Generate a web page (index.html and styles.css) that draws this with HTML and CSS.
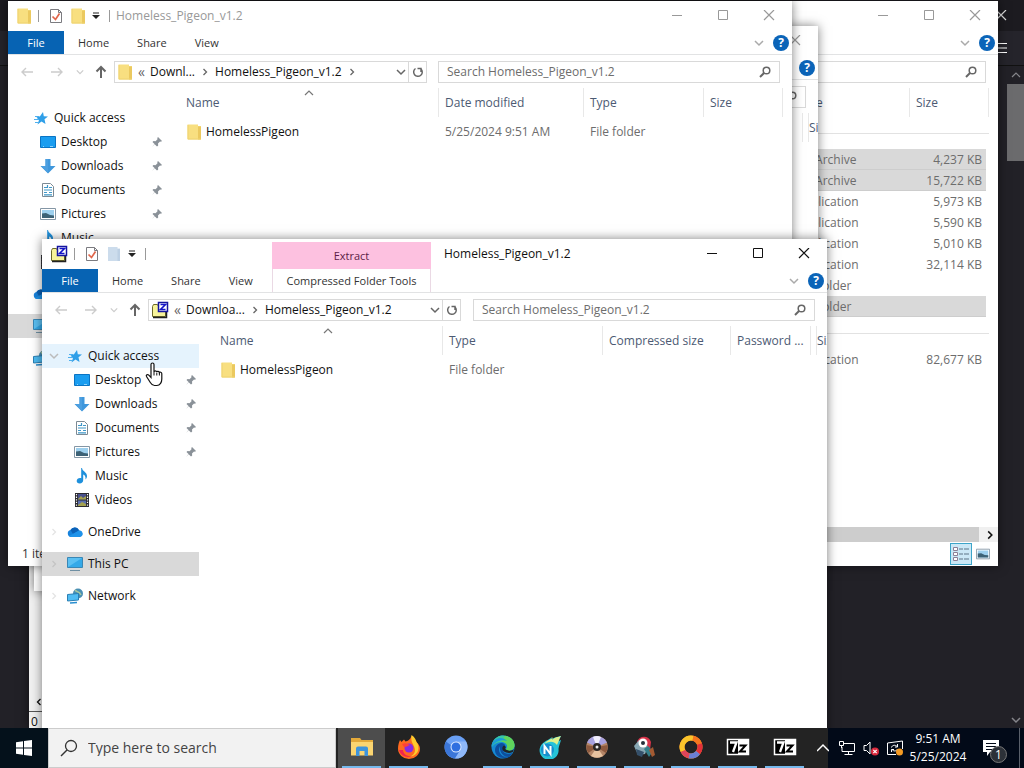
FILE: index.html
```html
<!DOCTYPE html>
<html lang="en">
<head>
  <meta charset="utf-8">
  <title>Desktop</title>
  <link rel="stylesheet" href="styles.css">
</head>
<body>
  <!-- shared icons -->
  <svg class="sprite" aria-hidden="true">
    <symbol id="i-folder" viewBox="0 0 16 16"><path d="M1.500.5h10.500V2H15v13.500H1.500z" fill="#f8df80"/><path d="M12 2.500h3v13h-3z" fill="#ebc95f"/><path d="M2 1v14h12.500" fill="none" stroke="#eed270"/></symbol>
    <symbol id="i-folder-off" viewBox="0 0 16 16"><path d="M2 1h9.500v1.500H14V15H2z" fill="#ccdcec"/><path d="M11.500 3h2.500v12h-2.500z" fill="#bdd0e4"/></symbol>
    <symbol id="i-zip" viewBox="0 0 18 18"><path d="M1.500 5.500l1-2h4l1 2h7v10h-13z" fill="#f8f49a" stroke="#6d6a28"/><path d="M2 16.500h13.500V10" fill="none" stroke="#222" stroke-width="1.500"/><path d="M7.500 1.500h9v9h-9z" fill="#fff" stroke="#1414a0" stroke-width="1.500"/><path d="M9.500 3.500h5l-5 5h5" fill="none" stroke="#1414c8" stroke-width="1.600"/></symbol>
    <symbol id="i-check" viewBox="0 0 16 16"><path d="M2.500 1.500h8l3 3v10h-11z" fill="#fff" stroke="#7b7b80"/><path d="M10.500 1.500v3h3" fill="none" stroke="#7b7b80"/><path d="M4.500 8.500l3 3 4-6" fill="none" stroke="#e0664b" stroke-width="1.700"/></symbol>
    <symbol id="i-more" viewBox="0 0 8 8"><path d="M1 .5h6v1H1zM0 3h8L4 7z" fill="#222"/></symbol>
    <symbol id="i-min" viewBox="0 0 12 12"><path d="M1 5.500h10" stroke="currentColor" fill="none"/></symbol>
    <symbol id="i-max" viewBox="0 0 12 12"><path d="M1.500 .5h9v9h-9z" stroke="currentColor" fill="none"/></symbol>
    <symbol id="i-close" viewBox="0 0 12 12"><path d="M1 0l10 10M11 0L1 10" stroke="currentColor" stroke-width="1.200" fill="none"/></symbol>
    <symbol id="i-down" viewBox="0 0 10 10"><path d="M1 3l4 4 4-4" stroke="currentColor" stroke-width="1.500" fill="none"/></symbol>
    <symbol id="i-right" viewBox="0 0 10 10"><path d="M3.500 2l3 3-3 3" stroke="currentColor" stroke-width="1.300" fill="none"/></symbol>
    <symbol id="i-up" viewBox="0 0 10 10"><path d="M1 7l4-4 4 4" stroke="currentColor" stroke-width="1.200" fill="none"/></symbol>
    <symbol id="i-arrow" viewBox="0 0 14 14"><path d="M13 7H2M6 3L2 7l4 4" stroke="currentColor" stroke-width="1.400" fill="none"/></symbol>
    <symbol id="i-arrow-up" viewBox="0 0 14 14"><path d="M7 13V2M2.500 6.500L7 2l4.500 4.500" stroke="currentColor" stroke-width="2" fill="none"/></symbol>
    <symbol id="i-refresh" viewBox="0 0 12 12"><path d="M3.500 2.500A4.300 4.300 0 1 0 9 3M9 6V2.500H5.500" stroke="currentColor" stroke-width="1.500" fill="none"/></symbol>
    <symbol id="i-search" viewBox="0 0 12 12"><circle cx="7.500" cy="4.500" r="3.300" stroke="currentColor" stroke-width="1.500" fill="none"/><path d="M5 7L1 11" stroke="currentColor" stroke-width="2"/></symbol>
    <symbol id="i-star" viewBox="0 0 16 16"><path d="M10 2l.8 4.200L15 6.500l-3.500 2.700 1 4.800-4-2.500L4.500 14.500l1.500-4.500L3.500 7.500l3.500-1.200z" fill="#2f9fe8"/><path d="M2 6.500h4M1 9.500h5M2 12.500h3" stroke="#4fb0ee" stroke-width="1.200"/></symbol>
    <symbol id="i-desktop" viewBox="0 0 16 16"><path d="M.5 2.500h15v11H.5z" fill="#1a9df0" stroke="#0a74c4"/><path d="M3 12.500h1M10 12.500h3" stroke="#8fd3fa"/></symbol>
    <symbol id="i-download" viewBox="0 0 16 16"><path d="M5.500 1h5v7H15.500L8 15.500.500 8h5z" fill="#3f97dc"/><path d="M5.500 1H8v14L1 8h4.500z" fill="#4c9fe0"/></symbol>
    <symbol id="i-document" viewBox="0 0 16 16"><path d="M2.500 1.500h8l3 3v10h-11z" fill="#fff" stroke="#7c8a94"/><path d="M4 5.500h3M9 5.500h3M4 8h8M4 10.500h3M9 10.500h3M4 12.800h8M7.500 3v3" stroke="#3f97c8" stroke-width="1.200"/></symbol>
    <symbol id="i-picture" viewBox="0 0 16 16"><path d="M.5 2.500h15v11H.5z" fill="#fff" stroke="#8496a5"/><path d="M2 4h12v8H2z" fill="#9ed0ee"/><path d="M2 7.500l4-.5 4 2 4 .5V12H2z" fill="#3d6276"/></symbol>
    <symbol id="i-music" viewBox="0 0 16 16"><path d="M8 0c.5 3.500 5 4 5 8 0 1.500-.6 2.500-1.500 3.500.5-3-1-4.500-2.300-5V12c0 2-1.500 3.500-3.500 3.500S2.700 14.500 2.700 13c0-1.700 1.600-3 3.300-3 .8 0 1 .2 1.200.3V0z" fill="#1e90dc"/></symbol>
    <symbol id="i-video" viewBox="0 0 16 16"><path d="M1 1h14v14H1z" fill="#2b2b30"/><path d="M4 2h8v5.500H4z" fill="#48508c"/><path d="M4 8.500h8V14H4z" fill="#5b6fae"/><path d="M4 7l3-3 2 2 3-2v3.500H4zM4 13l4-3 4 2v2H4z" fill="#a5a24e"/><path d="M2.500 2v13M13.500 2v13" stroke="#fff" stroke-width="1.200" stroke-dasharray="1.300 1.300"/></symbol>
    <symbol id="i-cloud" viewBox="0 0 16 16"><path d="M4 13a3.500 3.500 0 0 1-.5-6.900A4.600 4.600 0 0 1 12 6.500 3.300 3.300 0 0 1 12.700 13z" fill="#1782dc"/><path d="M3.500 6.100A4.600 4.600 0 0 1 12 6.500L6 10z" fill="#0c62b8"/><path d="M2 12L12 6.500a3.300 3.300 0 0 1 2.500 5.800L12 13H4z" fill="#1f93ea"/></symbol>
    <symbol id="i-pc" viewBox="0 0 16 16"><path d="M.5 1.500h15v10H.5z" fill="#5cc0f2" stroke="#3a87b5"/><path d="M1 11L15 2v9z" fill="#35a9e8"/><path d="M3 14.500h10" stroke="#6f8fa3"/></symbol>
    <symbol id="i-network" viewBox="0 0 16 16"><circle cx="11" cy="5.500" r="5" fill="#4a8fb4"/><path d="M8 2c2 3 4 0 6 5" stroke="#a6c8a0" stroke-width="1.500" fill="none"/><path d="M.5 6.500l11-1v6.500l-11 1z" fill="#4fbcf2" stroke="#2a7fb4"/><path d="M3 15l7-.5" stroke="#2a8fd0" stroke-width="1.500"/></symbol>
    <symbol id="i-pin" viewBox="0 0 12 12"><path d="M7 1l4 4-1 .7-1-.2-2 2 .2 2L6 10.500 3.700 8.300 1 11l2.500-3L1.500 6l1-1 2 .2 2-2L6.300 2z" fill="#8a9198"/></symbol>
  </svg>

  <main class="desktop">
    <!-- dark browser behind everything -->
    <div class="browser">
      <div class="browser-title"><svg class="s12"><use href="#i-close"/></svg></div>
      <div class="browser-bar"><svg class="s12" viewBox="0 0 12 12"><path d="M0 1.500h12M0 6h12M0 10.500h12" stroke="#fff"/></svg></div>
      <div class="browser-page">
        <div class="scroll">
          <svg class="s10"><use href="#i-up"/></svg>
          <div class="thumb"></div>
          <svg class="s10 last"><use href="#i-down"/></svg>
        </div>
      </div>
    </div>

    <div class="window old-app">
      <div class="old-scroll"><svg class="s10 flip"><use href="#i-right"/></svg></div>
      <div class="old-status">0</div>
    </div>

    <!-- downloads -->
    <section class="window inactive downloads">
      <header class="titlebar">
        <div class="caption">
          <button aria-label="Minimize"><svg class="s12"><use href="#i-min"/></svg></button>
          <button aria-label="Maximize"><svg class="s12"><use href="#i-max"/></svg></button>
          <button aria-label="Close"><svg class="s12"><use href="#i-close"/></svg></button>
        </div>
      </header>
      <div class="ribbon">
        <div class="ribbon-end"><svg class="s10"><use href="#i-down"/></svg><button class="help" aria-label="Help">?</button></div>
      </div>
      <div class="nav">
        <label class="search"><input type="text" aria-label="Search"><svg class="s12"><use href="#i-search"/></svg></label>
      </div>
      <div class="content">
        <div class="sidebar"></div>
        <div class="files">
          <table class="list dense">
            <colgroup><col class="c-name"><col class="c-date"><col class="c-type"><col class="c-size"></colgroup>
            <thead><tr><th></th><th></th><th>Type</th><th>Size</th></tr></thead>
            <tbody>
              <tr class="group"><td colspan="4"><hr></td></tr>
              <tr class="selected"><td></td><td></td><td>zip Archive</td><td>4,237 KB</td></tr>
              <tr class="selected"><td></td><td></td><td>zip Archive</td><td>15,722 KB</td></tr>
              <tr><td></td><td></td><td>Application</td><td>5,973 KB</td></tr>
              <tr><td></td><td></td><td>Application</td><td>5,590 KB</td></tr>
              <tr><td></td><td></td><td>Application</td><td>5,010 KB</td></tr>
              <tr><td></td><td></td><td>Application</td><td>32,114 KB</td></tr>
              <tr><td></td><td></td><td>File folder</td><td></td></tr>
              <tr class="selected"><td></td><td></td><td>File folder</td><td></td></tr>
              <tr class="group"><td colspan="4"><hr></td></tr>
              <tr><td></td><td></td><td>Application</td><td>82,677 KB</td></tr>
            </tbody>
          </table>
        </div>
      </div>
      <div class="hscroll"><div class="hthumb"></div><svg class="s12"><use href="#i-right"/></svg></div>
      <footer class="status">
        <button class="view on" aria-label="Details"><svg class="s16" viewBox="0 0 16 16"><path d="M.5 1.500h4v3h-4zM.5 6.500h4v3h-4zM.5 11.500h4v3h-4z" fill="#fff" stroke="#8d7f96"/><path d="M6 3h4M11 3h5M6 8h4M11 8h5M6 13h4M11 13h5" stroke="#5d7586"/></svg></button>
        <button class="view" aria-label="Large icons"><svg class="s14"><use href="#i-picture"/></svg></button>
      </footer>
    </section>

    <section class="window inactive zip-back">
      <header class="titlebar">
        <div class="caption">
          <button aria-label="Minimize"><svg class="s12"><use href="#i-min"/></svg></button>
          <button aria-label="Maximize"><svg class="s12"><use href="#i-max"/></svg></button>
          <button aria-label="Close"><svg class="s12"><use href="#i-close"/></svg></button>
        </div>
      </header>
      <div class="ribbon">
        <div class="ribbon-end"><svg class="s10"><use href="#i-down"/></svg><button class="help" aria-label="Help">?</button></div>
      </div>
      <div class="nav">
        <label class="search"><input type="text" aria-label="Search"><svg class="s12"><use href="#i-search"/></svg></label>
      </div>
      <div class="content">
        <div class="sidebar"></div>
        <div class="files">
          <table class="list">
            <colgroup><col class="z-name"><col class="z-type"><col class="z-comp"><col class="z-pass"><col class="z-size"></colgroup>
            <thead><tr><th></th><th></th><th></th><th></th><th>Size</th></tr></thead>
          </table>
        </div>
      </div>
    </section>

    <!-- extracted folder -->
    <section class="window inactive extracted">
      <header class="titlebar">
        <div class="quick">
          <svg class="s16"><use href="#i-folder"/></svg><i class="sep"></i>
          <button aria-label="Properties"><svg class="s16"><use href="#i-check"/></svg></button>
          <button aria-label="New folder"><svg class="s16"><use href="#i-folder"/></svg></button>
          <button class="more" aria-label="Customize"><svg class="s8"><use href="#i-more"/></svg></button><i class="sep"></i>
        </div>
        <h1 class="title">Homeless_Pigeon_v1.2</h1>
        <div class="caption">
          <button aria-label="Minimize"><svg class="s12"><use href="#i-min"/></svg></button>
          <button aria-label="Maximize"><svg class="s12"><use href="#i-max"/></svg></button>
          <button aria-label="Close"><svg class="s12"><use href="#i-close"/></svg></button>
        </div>
      </header>
      <div class="ribbon">
        <button class="tab file">File</button>
        <button class="tab">Home</button>
        <button class="tab">Share</button>
        <button class="tab">View</button>
        <div class="ribbon-end"><svg class="s10"><use href="#i-down"/></svg><button class="help" aria-label="Help">?</button></div>
      </div>
      <div class="nav">
        <button class="go off" aria-label="Back"><svg class="s14"><use href="#i-arrow"/></svg></button>
        <button class="go off flip" aria-label="Forward"><svg class="s14"><use href="#i-arrow"/></svg></button>
        <button class="recent off" aria-label="Recent"><svg class="s8"><use href="#i-down"/></svg></button>
        <button class="parent" aria-label="Up"><svg class="s14"><use href="#i-arrow-up"/></svg></button>
        <div class="address">
          <svg class="s16"><use href="#i-folder"/></svg>
          <span class="quote">«</span><a href="#">Downl...</a><svg class="s10"><use href="#i-right"/></svg><a href="#">Homeless_Pigeon_v1.2</a><svg class="s10"><use href="#i-right"/></svg>
          <button class="drop" aria-label="Previous locations"><svg class="s10"><use href="#i-down"/></svg></button>
          <button class="refresh" aria-label="Refresh"><svg class="s12"><use href="#i-refresh"/></svg></button>
        </div>
        <label class="search"><input type="text" aria-label="Search" placeholder="Search Homeless_Pigeon_v1.2"><svg class="s12"><use href="#i-search"/></svg></label>
      </div>
      <div class="content">
        <nav class="sidebar">
          <a class="top" href="#"><svg class="s16"><use href="#i-star"/></svg>Quick access</a>
          <a href="#"><svg class="s16"><use href="#i-desktop"/></svg>Desktop<svg class="s12 pin"><use href="#i-pin"/></svg></a>
          <a href="#"><svg class="s16"><use href="#i-download"/></svg>Downloads<svg class="s12 pin"><use href="#i-pin"/></svg></a>
          <a href="#"><svg class="s16"><use href="#i-document"/></svg>Documents<svg class="s12 pin"><use href="#i-pin"/></svg></a>
          <a href="#"><svg class="s16"><use href="#i-picture"/></svg>Pictures<svg class="s12 pin"><use href="#i-pin"/></svg></a>
          <a href="#"><svg class="s16"><use href="#i-music"/></svg>Music</a>
          <a href="#"><svg class="s16"><use href="#i-video"/></svg>Videos</a>
          <a class="top apart" href="#"><svg class="s16"><use href="#i-cloud"/></svg>OneDrive</a>
          <a class="top apart current" href="#"><svg class="s16"><use href="#i-pc"/></svg>This PC</a>
          <a class="top apart" href="#"><svg class="s16"><use href="#i-network"/></svg>Network</a>
        </nav>
        <div class="files">
          <table class="list">
            <colgroup><col class="c-name"><col class="c-date"><col class="c-type"><col class="c-size"></colgroup>
            <thead><tr><th>Name<svg class="s10 sort"><use href="#i-up"/></svg></th><th>Date modified</th><th>Type</th><th>Size</th></tr></thead>
            <tbody>
              <tr><td><span class="entry"><svg class="s16"><use href="#i-folder"/></svg>HomelessPigeon</span></td><td>5/25/2024 9:51 AM</td><td>File folder</td><td></td></tr>
            </tbody>
          </table>
        </div>
      </div>
      <footer class="status"><span>1 item</span></footer>
    </section>

    <!-- active zip window -->
    <section class="window zip">
      <header class="titlebar">
        <div class="quick">
          <svg class="s18"><use href="#i-zip"/></svg><i class="sep"></i>
          <button aria-label="Properties"><svg class="s16"><use href="#i-check"/></svg></button>
          <button aria-label="New folder"><svg class="s16"><use href="#i-folder-off"/></svg></button>
          <button class="more" aria-label="Customize"><svg class="s8"><use href="#i-more"/></svg></button><i class="sep"></i>
        </div>
        <div class="context">Extract</div>
        <h1 class="title">Homeless_Pigeon_v1.2</h1>
        <div class="caption">
          <button aria-label="Minimize"><svg class="s12"><use href="#i-min"/></svg></button>
          <button aria-label="Maximize"><svg class="s12"><use href="#i-max"/></svg></button>
          <button aria-label="Close"><svg class="s12"><use href="#i-close"/></svg></button>
        </div>
      </header>
      <div class="ribbon">
        <div class="tabs">
          <button class="tab file">File</button>
          <button class="tab">Home</button>
          <button class="tab">Share</button>
          <button class="tab">View</button>
        </div>
        <button class="tab tools">Compressed Folder Tools</button>
        <div class="ribbon-end"><svg class="s10"><use href="#i-down"/></svg><button class="help" aria-label="Help">?</button></div>
      </div>
      <div class="nav">
        <button class="go off" aria-label="Back"><svg class="s14"><use href="#i-arrow"/></svg></button>
        <button class="go off flip" aria-label="Forward"><svg class="s14"><use href="#i-arrow"/></svg></button>
        <button class="recent off" aria-label="Recent"><svg class="s8"><use href="#i-down"/></svg></button>
        <button class="parent" aria-label="Up"><svg class="s14"><use href="#i-arrow-up"/></svg></button>
        <div class="address">
          <svg class="s18"><use href="#i-zip"/></svg>
          <span class="quote">«</span><a href="#">Downloa...</a><svg class="s10"><use href="#i-right"/></svg><a href="#">Homeless_Pigeon_v1.2</a>
          <button class="drop" aria-label="Previous locations"><svg class="s10"><use href="#i-down"/></svg></button>
          <button class="refresh" aria-label="Refresh"><svg class="s12"><use href="#i-refresh"/></svg></button>
        </div>
        <label class="search"><input type="text" aria-label="Search" placeholder="Search Homeless_Pigeon_v1.2"><svg class="s12"><use href="#i-search"/></svg></label>
      </div>
      <div class="content">
        <nav class="sidebar">
          <a class="top hover" href="#"><svg class="s10 twist"><use href="#i-down"/></svg><svg class="s16"><use href="#i-star"/></svg>Quick access</a>
          <a href="#"><svg class="s16"><use href="#i-desktop"/></svg>Desktop<svg class="s12 pin"><use href="#i-pin"/></svg></a>
          <a href="#"><svg class="s16"><use href="#i-download"/></svg>Downloads<svg class="s12 pin"><use href="#i-pin"/></svg></a>
          <a href="#"><svg class="s16"><use href="#i-document"/></svg>Documents<svg class="s12 pin"><use href="#i-pin"/></svg></a>
          <a href="#"><svg class="s16"><use href="#i-picture"/></svg>Pictures<svg class="s12 pin"><use href="#i-pin"/></svg></a>
          <a href="#"><svg class="s16"><use href="#i-music"/></svg>Music</a>
          <a href="#"><svg class="s16"><use href="#i-video"/></svg>Videos</a>
          <a class="top apart" href="#"><svg class="s10 twist"><use href="#i-right"/></svg><svg class="s16"><use href="#i-cloud"/></svg>OneDrive</a>
          <a class="top apart current" href="#"><svg class="s10 twist"><use href="#i-right"/></svg><svg class="s16"><use href="#i-pc"/></svg>This PC</a>
          <a class="top apart" href="#"><svg class="s10 twist"><use href="#i-right"/></svg><svg class="s16"><use href="#i-network"/></svg>Network</a>
        </nav>
        <div class="files">
          <table class="list">
            <colgroup><col class="z-name"><col class="z-type"><col class="z-comp"><col class="z-pass"><col class="z-size"></colgroup>
            <thead><tr><th>Name<svg class="s10 sort"><use href="#i-up"/></svg></th><th>Type</th><th>Compressed size</th><th>Password ...</th><th>Size</th></tr></thead>
            <tbody>
              <tr><td><span class="entry"><svg class="s16"><use href="#i-folder"/></svg>HomelessPigeon</span></td><td>File folder</td><td></td><td></td><td></td></tr>
            </tbody>
          </table>
        </div>
      </div>
    </section>

    <svg class="cursor" viewBox="0 0 18 25"><path d="M6 2.500C6 .5 9 .5 9 2.500V10c0-1.500 2.500-1.500 2.800 0 .2-1 2.400-1 2.600.6.4-.8 2.400-.5 2.400 1.200V17c0 3-1.600 6.500-5 6.500H9.500c-2 0-3-1-4.200-3L1.500 14.500c-.8-1.500 1-2.700 2.300-1.300L6 15.500z" fill="#fff" stroke="#111" stroke-width="1.200"/><path d="M9 10v3.500M11.800 10.500v3M14.400 11v2.500" stroke="#111" stroke-width="1"/></svg>
  </main>

  <footer class="taskbar">
    <button class="start" aria-label="Start"><svg class="s16" viewBox="0 0 16 16"><path d="M0 2.300L7 1.300v6.200H0zM8 1.100L16 0v7.500H8zM0 8.500h7v6.200l-7-1zM8 8.500h8V16l-8-1.100z" fill="#fff"/></svg></button>
    <label class="find">
      <svg class="s18" viewBox="0 0 18 18"><circle cx="11" cy="7" r="5.500" fill="none" stroke="#333" stroke-width="1.300"/><path d="M7 11l-6 6" stroke="#333" stroke-width="1.500"/></svg>
      <input type="text" aria-label="Search Windows" placeholder="Type here to search">
    </label>
    <div class="apps">
      <button class="app open focus" aria-label="File Explorer"><svg viewBox="0 0 24 24"><path d="M1 3h9l1.500 2H23v15H1z" fill="#e3a93a"/><path d="M1 7h22v13.500H1z" fill="#fbd571"/><path d="M6 21v-7.500q0-2 2-2h8q2 0 2 2V21h-3.500v-5h-5v5z" fill="#3e94dc"/></svg></button>
      <button class="app open" aria-label="Firefox"><svg viewBox="0 0 24 24"><path d="M3 5l1.500 2L7 4.500l1.500 2C11 6 13 5 14.500 1c2 1.500 2.500 3 3 4.500l1.500 1c2.500 2 4 5 4 7A11 10.500 0 0 1 1 13.500C1 10 2 7 3 5z" fill="#ff6a1f"/><path d="M14.500 0c3.500 2.500 4.500 5 5 7 2 2.500 2.500 5 1.500 9-2 4-5 5.500-8 5.500 5-2 6-6 4-10-1-3-3.500-5-2.500-11.500z" fill="#ffcb2d"/><path d="M2 15c2 7 9 8 13 6-6 1-9-3-9-6z" fill="#f0254f"/><circle cx="12" cy="13" r="4.500" fill="#8a2be0"/><path d="M5 9c4-2 6 0 8 1-3 1-3 2-6 2z" fill="#ff4038"/></svg></button>
      <button class="app" aria-label="Chromium"><svg viewBox="0 0 24 24"><circle cx="12" cy="12" r="11.500" fill="#6aa0f5"/><path d="M2 6.500A11.500 11.500 0 0 0 11 23.500l4.500-7z" fill="#3b76d8"/><path d="M12 6.500h10A11.500 11.500 0 0 1 11 23.500l5-8z" fill="#8fb8f8"/><circle cx="12" cy="12" r="5.500" fill="#dce9ff"/><circle cx="12" cy="12" r="4.500" fill="#2f6fe0"/></svg></button>
      <button class="app open" aria-label="Edge"><svg viewBox="0 0 24 24"><circle cx="12" cy="12" r="11.500" fill="#1689d3"/><path d="M1 9C3 2 9 .5 12 .5c7 0 11.500 5 11.500 9.500 0 4-3 5.500-6 5.500-2 0-3-1-2-2 2-4-1-6.500-5-6.500C6 7 2 10 1 12z" fill="#39c7a0"/><path d="M14 .7c6 .8 9.500 5 9.500 9.500 0 4-3 5.500-6 5.500-2 0-3-1-2-2 2-4-1-6.500-5-6.700z" fill="#5fd45c"/><path d="M.6 10C3 2 12 1 16 6c-5-2-12 0-15.400 6z" fill="#1c9bd8"/><path d="M9 11c-3 5 1 12 9 11-8 3-14-1-14-7 0-3 2-6 6-7 4 0 5 3 4 5.500L12 15c0 3 5 5 9.500 3-1 1.500-2 3-3.500 4C12 22 8 17 9 11z" fill="#0d4f9e"/><path d="M13 10.500c-2 1-2.500 4 0 6 2 1.500 6 2 8.800.5l1.200-3c-2 2-5 2-7 1-2-.5-2-2-1-3z" fill="#202527"/></svg></button>
      <button class="app open" aria-label="Nox"><svg viewBox="0 0 24 24"><path d="M23 1l-2.500 5L23 5c-1 4-2 5-2.500 9A9.500 9.500 0 1 1 4 9c4-4 7-4 10-7l-1 3c3-3 6-3 10-4z" fill="#26c3d8"/><path d="M23 1c-2 3-2 5-4 9-4-5-9-3-13-1 4-5 7-4 9-7l-1 3c3-3 6-3 9-4z" fill="#dff08c"/><circle cx="9.500" cy="15" r="6.500" fill="#178ecf"/><path d="M6.500 19v-8l6 8v-8" fill="none" stroke="#fff" stroke-width="2"/></svg></button>
      <button class="app open" aria-label="Disc"><svg viewBox="0 0 24 24"><circle cx="12" cy="12" r="10.800" fill="#b48668"/><path d="M12 12L2 7.500C5 1.500 9 1 12 1.200s7 1 10 6.300z" fill="#a8a2e0"/><path d="M12 12L8 2q4-2 8 0z" fill="#f0eefc"/><path d="M12 12L6 21q6 3.500 12 0z" fill="#e8c3a0"/><path d="M12 12L1.200 10q0 5 2 8zM12 12l10.800-2q0 5-2 8z" fill="#8d593e"/><circle cx="12" cy="12" r="4" fill="#2a2626"/><circle cx="12" cy="12" r="1.500" fill="#eee"/></svg></button>
      <button class="app open" aria-label="Tools"><svg viewBox="0 0 24 24"><path d="M5 7C7 0 17 0 19 7l-1 8H8z" fill="#d8344a"/><path d="M2 11l5-6 6 1 3 6-3 7-7 1z" fill="#87a7b3"/><circle cx="11" cy="8" r="4.500" fill="#fff"/><circle cx="11" cy="8" r="2" fill="#26303a"/><path d="M4 14l8 3-2 5-5-2z" fill="#35506a"/><path d="M12 14l4-3 5 5-4 6z" fill="#347f89"/><path d="M17 15l4-3 2 8-3 2z" fill="#a35a32"/></svg></button>
      <button class="app open" aria-label="Recorder"><svg viewBox="0 0 24 24" fill="none" stroke-width="5"><circle cx="12" cy="12" r="9" stroke="#f5872a"/><path d="M4 16A9 9 0 0 1 14 3.200" stroke="#fbc52b"/><path d="M14 3.200A9 9 0 0 1 20.500 9" stroke="#f4761f"/><path d="M20.500 9A9 9 0 0 1 19 17.700" stroke="#e5303a"/><path d="M19 17.700A9 9 0 0 1 10 20.800" stroke="#6a7fd4"/><path d="M10 20.800A9 9 0 0 1 4 16" stroke="#e0455a"/></svg></button>
      <button class="app open" aria-label="7-Zip"><svg viewBox="0 0 24 24"><path d="M1.500 4.500h21v15h-21z" fill="#000" stroke="#fff" stroke-width="1.500"/><path d="M12 5h10v14H12z" fill="#fff"/><path d="M4 7.500h6.500L7 17" fill="none" stroke="#fff" stroke-width="2.300"/><path d="M13.500 10.500h6l-5.500 6h6" fill="none" stroke="#000" stroke-width="2"/></svg></button>
      <button class="app open" aria-label="7-Zip"><svg viewBox="0 0 24 24"><path d="M1.500 4.500h21v15h-21z" fill="#000" stroke="#fff" stroke-width="1.500"/><path d="M12 5h10v14H12z" fill="#fff"/><path d="M4 7.500h6.500L7 17" fill="none" stroke="#fff" stroke-width="2.300"/><path d="M13.500 10.500h6l-5.500 6h6" fill="none" stroke="#000" stroke-width="2"/></svg></button>
    </div>
    <div class="tray">
      <button aria-label="Show hidden icons"><svg class="s12" viewBox="0 0 12 12"><path d="M0 9l6-6 6 6" fill="none" stroke="#fff" stroke-width="1.500"/></svg></button>
      <button aria-label="Network"><svg class="s16" viewBox="0 0 16 16"><path d="M5 3.500h10.500v8H3V7M9.500 11.500v3M5.500 14.500h8M.5 1.500h4v4h-4zM2.500 5.500V8" fill="none" stroke="#fff"/></svg></button>
      <button aria-label="Volume"><svg class="s16" viewBox="0 0 16 16"><path d="M1 5.500h2.500L7 2v12l-3.500-3.500H1z" fill="none" stroke="#fff"/><circle cx="12" cy="11.500" r="4" fill="#d8283c"/><path d="M10.300 9.800l3.400 3.400M13.700 9.800l-3.400 3.400" stroke="#fff" stroke-width="1.200"/></svg></button>
      <button aria-label="Updates"><svg class="s16" viewBox="0 0 16 16"><path d="M9 14.500H.5V3L15.500 1v8" fill="none" stroke="#fff"/><path d="M4.500 7.500C5 5 8.500 4.500 10 6.500M10.500 4v3H8M10.500 9c-1 2.500-4 2.500-5.500.5M4.500 12V9.500H7" fill="none" stroke="#fff"/><circle cx="12.500" cy="12" r="3.500" fill="#f59b23"/></svg></button>
      <div class="clock"><span>9:51 AM</span><span>5/25/2024</span></div>
      <button class="notes" aria-label="Notifications"><svg class="s18" viewBox="0 0 18 18"><path d="M1 1h16v12H8l-3 4v-4H1z" fill="#fff"/><path d="M4 4.500h10M4 7.500h10M4 10.500h7" stroke="#020a18"/></svg><span class="badge">1</span></button>
      <i class="peek"></i>
    </div>
  </footer>
</body>
</html>
```

FILE: styles.css
```css
* {
  box-sizing: border-box;
}

body {
  margin: 0;
  height: 100vh;
  display: flex;
  flex-direction: column;
  overflow: hidden;
  background: #222127;
  color: #111;
  font-family: "Open Sans", "Noto Sans", sans-serif;
  font-size: 12px;
  line-height: 16px;
}

button,
input {
  padding: 0;
  border: 0;
  background: none;
  color: inherit;
  font: inherit;
}

button {
  display: flex;
  align-items: center;
  justify-content: center;
}

a {
  color: inherit;
  text-decoration: none;
}

svg {
  display: block;
  flex: none;
}

.sprite { display: none; }

.s8 { width: 8px; height: 8px; }
.s10 { width: 10px; height: 10px; }
.s12 { width: 12px; height: 12px; }
.s14 { width: 14px; height: 14px; }
.s16 { width: 16px; height: 16px; }
.s18 { width: 18px; height: 18px; }

.flip { transform: scaleX(-1); }

.desktop {
  position: relative;
  flex: 1;
  overflow: hidden;
}

/* browser in the background */
.browser {
  height: 100%;
  display: flex;
  flex-direction: column;
  color: #ddd;
}

.browser-title,
.browser-bar {
  display: flex;
  align-items: center;
  justify-content: flex-end;
  padding-right: 17px;
}

.browser-title {
  height: 31px;
  background: #1c1b20;
}

.browser-bar {
  height: 35px;
  background: #25242b;
  border-bottom: 1px solid #111;
}

.browser-page {
  flex: 1;
  display: flex;
  justify-content: flex-end;
}

.scroll {
  width: 17px;
  display: flex;
  flex-direction: column;
  align-items: center;
  padding: 4px 0 3px;
  color: #85858a;
}

.thumb {
  width: 17px;
  height: 77px;
  margin-top: 4px;
  background: #6b6b6d;
}

.last { margin-top: auto; }

/* windows */
.window {
  position: absolute;
  display: flex;
  flex-direction: column;
  width: 784px;
  height: 565px;
  overflow: hidden;
  background: #fff;
  box-shadow: 0 0 10px rgba(0, 0, 0, .5);
}

.downloads { left: 214px; top: 1px; }
.zip-back { left: 34px; top: 26px; }
.extracted { left: 8px; top: 1px; }
.zip {
  left: 42px;
  top: 239px;
  width: 785px;
}

.old-app {
  left: 29px;
  top: 340px;
  height: auto;
  bottom: 0;
  width: 600px;
  justify-content: flex-end;
  background: #f0f0f0;
}

.old-scroll {
  height: 19px;
  padding: 4px 5px;
  border-bottom: 1px solid #555;
}

.old-status {
  height: 16px;
  padding: 2px;
}

.titlebar {
  display: flex;
  height: 30px;
  flex: none;
}

.inactive .title,
.inactive .caption { color: #999; }

.quick {
  display: flex;
  align-items: center;
  padding-left: 8px;
}

.quick button {
  width: 22px;
  height: 22px;
}

.quick .more { width: 14px; }

.sep {
  width: 1px;
  height: 12px;
  margin: 0 6px;
  background: #999;
}

.zip .quick {
  width: 230px;
}

.context {
  display: flex;
  align-items: center;
  justify-content: center;
  width: 159px;
  margin-top: 3px;
  background: #fdc1e0;
  color: #5c1d47;
  font-size: 11px;
}

.title {
  margin: 0;
  font-size: 12px;
  font-weight: 400;
  line-height: 30px;
}

.zip .title { margin-left: 13px; }

.caption {
  display: flex;
  margin-left: auto;
}

.caption button { width: 46px; }

.ribbon {
  display: flex;
  height: 24px;
  flex: none;
  border-bottom: 1px solid #e2e3e4;
}

.tabs {
  display: flex;
  width: 230px;
}

.tab {
  padding: 0 14px;
  color: #333;
  font-size: 11px;
}

.file {
  width: 56px;
  flex: none;
  padding: 0;
  background: #0763b3;
  color: #fff;
}

.tools {
  width: 159px;
  padding: 0;
  border: solid #ead9e4;
  border-width: 0 1px;
}

.ribbon-end {
  display: flex;
  align-items: center;
  gap: 9px;
  margin-left: auto;
  padding-right: 3px;
  color: #aaa;
}

.help {
  width: 16px;
  height: 16px;
  border-radius: 50%;
  background: #0b64b8;
  color: #fff;
  font-weight: 700;
}

.nav {
  display: flex;
  align-items: center;
  height: 33px;
  flex: none;
  padding: 0 12px 0 4px;
  color: #666;
}

.go { width: 30px; }
.recent { width: 16px; }
.parent { width: 26px; }
.off { color: #ccc; }

.address,
.search {
  display: flex;
  align-items: center;
  height: 22px;
  border: 1px solid #d9d9d9;
}

.address {
  width: 313px;
  padding-left: 2px;
}

.address a {
  margin: 0 5px;
  color: #111;
}

.quote {
  margin-left: 5px;
  font-size: 14px;
}

.address button { height: 20px; }

.drop {
  width: 14px;
  margin-left: auto;
}

.refresh {
  width: 18px;
  border-left: 1px solid #d9d9d9;
}

.search {
  width: 342px;
  margin-left: auto;
  padding: 0 8px;
}

.search input {
  flex: 1;
  min-width: 0;
  outline: 0;
}

.search input::placeholder { color: #6d6d6d; }

.content {
  display: flex;
  flex: 1;
  min-height: 0;
}

.sidebar {
  width: 157px;
  flex: none;
  padding-top: 18px;
}

.sidebar a {
  display: flex;
  align-items: center;
  height: 24px;
  padding-left: 32px;
  gap: 5px;
}

.sidebar .top {
  position: relative;
  padding-left: 25px;
}

.sidebar .apart { margin-top: 8px; }
.sidebar .hover { background: #e5f3fd; }
.sidebar .current { background: #d9d9d9; }

.twist {
  position: absolute;
  left: 7px;
  color: #bbb;
}

.apart .twist { color: #e4e4e4; }
.current .twist { color: #c4c4c4; }

.pin {
  margin-left: auto;
  margin-right: 2px;
}

.files {
  flex: 1;
  min-width: 0;
  padding-left: 15px;
}

.list {
  width: 603px;
  table-layout: fixed;
  border-collapse: separate;
  border-spacing: 0;
}

.c-name { width: 259px; }
.c-date { width: 145px; }
.c-type { width: 120px; }
.c-size { width: 79px; }
.z-name { width: 229px; }
.z-type { width: 160px; }
.z-comp { width: 128px; }
.z-pass { width: 80px; }
.z-size { width: 6px; }

.list th {
  position: relative;
  height: 29px;
  padding: 0 0 0 6px;
  border-right: 1px solid #e8e8e8;
  color: #4c5a73;
  font-weight: 400;
  text-align: left;
  white-space: nowrap;
}

.sort {
  position: absolute;
  left: 50%;
  top: 0;
  margin-left: -5px;
  color: #777;
}

.list td {
  height: 30px;
  padding: 0 0 0 6px;
  color: #6d6d6d;
  white-space: nowrap;
}

.entry {
  display: flex;
  align-items: center;
  gap: 4px;
  color: #111;
}

.dense td { height: 21px; }

.dense td:last-child {
  padding-right: 4px;
  border-right: 3px solid #fff;
  text-align: right;
}

.dense .selected td {
  background: #d9d9d9;
  box-shadow: inset 0 -1px #cdcdcd;
}

.dense .group td {
  height: 32px;
  padding: 0;
  border: 0;
}

.group hr {
  margin: 0;
  border: 0;
  border-top: 1px solid #e2e2e2;
}

.hscroll {
  display: flex;
  align-items: center;
  height: 15px;
  flex: none;
  padding-right: 2px;
  background: #f0f0f0;
}

.hthumb {
  flex: 1;
  height: 15px;
  margin-right: 5px;
  background: #cdcdcd;
}

.status {
  display: flex;
  align-items: center;
  height: 24px;
  flex: none;
  padding: 0 4px 0 14px;
  color: #333;
}

.view {
  width: 22px;
  height: 22px;
}

.view:first-child { margin-left: auto; }

.view.on {
  border: 1px solid #3da5c9;
  background: #cbe8f6;
}

.cursor {
  position: absolute;
  left: 145px;
  top: 362px;
  width: 18px;
  height: 25px;
}

/* taskbar */
.taskbar {
  display: flex;
  height: 40px;
  flex: none;
  background: #232323;
  color: #fff;
}

.start {
  width: 48px;
  background: #04111b;
}

.find {
  display: flex;
  align-items: center;
  gap: 10px;
  width: 288px;
  margin-right: 2px;
  padding-left: 11px;
  border: 1px solid #ccc;
  background: #f2f2f2;
  color: #333;
}

.find input {
  flex: 1;
  outline: 0;
  font-size: 14px;
}

.find input::placeholder { color: #444; }

.apps {
  display: flex;
}

.app {
  width: 47px;
  padding-bottom: 2px;
  border: solid transparent;
  border-width: 0 4px;
}

.app svg {
  width: 24px;
  height: 24px;
}

.app.open { box-shadow: inset 0 -2px #76b9ed; }

.app.focus { background: #4d4d4d; }

.tray {
  display: flex;
  align-items: center;
  flex: 1;
  justify-content: flex-end;
  background: linear-gradient(90deg, #232323 20px, #020a18 20px);
}

.tray button {
  width: 24px;
  height: 40px;
}

.clock {
  display: flex;
  flex-direction: column;
  width: 62px;
  line-height: 18px;
  text-align: center;
}

.tray .notes {
  position: relative;
  width: 44px;
  margin-right: 6px;
}

.badge {
  position: absolute;
  left: 21px;
  top: 18px;
  width: 17px;
  height: 17px;
  border: 1px solid #777;
  border-radius: 50%;
  background: #2c3138;
  line-height: 15px;
}

.peek {
  width: 1px;
  height: 40px;
  margin-right: 4px;
  background: #5a606a;
}
```
